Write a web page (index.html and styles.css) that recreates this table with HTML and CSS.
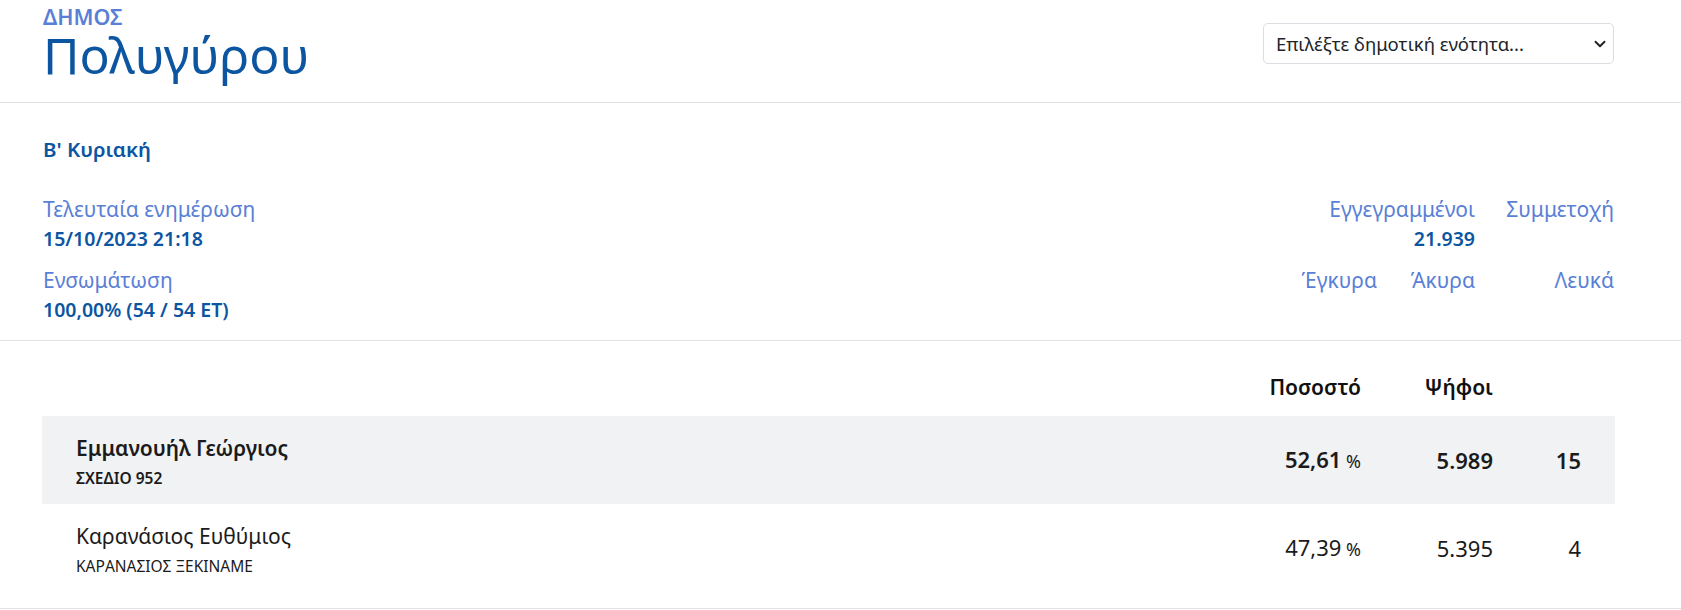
FILE: index.html
```html
<!DOCTYPE html>
<html lang="el">
<head>
<meta charset="utf-8">
<title>Δήμος Πολυγύρου</title>
<link rel="stylesheet" href="styles.css">
</head>
<body>
<header class="header">
  <div class="title-block">
    <div class="kicker">Δημος</div>
    <h1 class="name">Πολυγύρου</h1>
  </div>
  <div class="select">
    <span class="select-text">Επιλέξτε δημοτική ενότητα...</span>
    <svg class="chevron" viewBox="0 0 16 16" width="12" height="12"><path d="M2 5l6 6 6-6" fill="none" stroke="#212529" stroke-width="2.6" stroke-linecap="round" stroke-linejoin="round"/></svg>
  </div>
</header>

<section class="summary">
  <div class="district">Β' Κυριακή</div>
  <div class="stats">
    <div class="stats-left">
      <div class="stat">
        <div class="label">Τελευταία ενημέρωση</div>
        <div class="value">15/10/2023 21:18</div>
      </div>
      <div class="stat">
        <div class="label">Ενσωμάτωση</div>
        <div class="value">100,00% (54 / 54 ΕΤ)</div>
      </div>
    </div>
    <div class="stats-right">
      <div class="stat stat-registered">
        <div class="label">Εγγεγραμμένοι</div>
        <div class="value">21.939</div>
      </div>
      <div class="stat stat-turnout">
        <div class="label">Συμμετοχή</div>
      </div>
      <div class="stat stat-valid">
        <div class="label">Έγκυρα</div>
      </div>
      <div class="stat stat-invalid">
        <div class="label">Άκυρα</div>
      </div>
      <div class="stat stat-blank">
        <div class="label">Λευκά</div>
      </div>
    </div>
  </div>
</section>

<section class="results">
  <div class="row head">
    <div class="c-name"></div>
    <div class="c-pct">Ποσοστό</div>
    <div class="c-votes">Ψήφοι</div>
    <div class="c-seats"></div>
  </div>
  <div class="row cand winner">
    <div class="c-name">
      <div class="cand-name">Εμμανουήλ Γεώργιος</div>
      <div class="party">ΣΧΕΔΙΟ 952</div>
    </div>
    <div class="c-pct">52,61<span class="pct"> %</span></div>
    <div class="c-votes">5.989</div>
    <div class="c-seats">15</div>
  </div>
  <div class="row cand">
    <div class="c-name">
      <div class="cand-name">Καρανάσιος Ευθύμιος</div>
      <div class="party">ΚΑΡΑΝΑΣΙΟΣ ΞΕΚΙΝΑΜΕ</div>
    </div>
    <div class="c-pct">47,39<span class="pct"> %</span></div>
    <div class="c-votes">5.395</div>
    <div class="c-seats">4</div>
  </div>
</section>
</body>
</html>
```
FILE: styles.css
```css
* { box-sizing: border-box; }
html, body { margin: 0; padding: 0; background: #fff; }
body {
  font-family: "Noto Sans", "Open Sans", sans-serif;
  color: #1b1b1b;
}
.header {
  display: flex;
  justify-content: space-between;
  align-items: flex-start;
  padding: 0 67px 0 43px;
  height: 103px;
  border-bottom: 1px solid #dfe3e8;
}
.kicker {
  font-size: 21.5px;
  line-height: 26px;
  font-weight: 600;
  text-transform: uppercase;
  color: #5a7fd6;
  margin-top: 4px;
}
.name {
  margin: 0;
  font-size: 50px;
  line-height: 51px;
  font-weight: 400;
  color: #0c55a1;
}
.select {
  margin-top: 23px;
  width: 351px;
  height: 41px;
  border: 1px solid #dadee3;
  border-radius: 5px;
  display: flex;
  align-items: center;
  justify-content: space-between;
  padding: 0 7px 0 12px;
}
.select-text {
  font-size: 18.5px;
  color: #212529;
}
.chevron { width: 12px; height: 12px; }

.summary {
  padding: 32px 67px 0 43px;
  height: 238px;
  border-bottom: 1px solid #dfe3e8;
}
.district {
  font-size: 20.5px;
  line-height: 28px;
  font-weight: 600;
  color: #0c55a1;
}
.stats {
  display: flex;
  justify-content: space-between;
  align-items: flex-start;
  margin-top: 31px;
}
.stat { margin-bottom: 11px; }
.label {
  font-size: 21px;
  line-height: 30px;
  color: #5a7fd6;
}
.value {
  font-size: 19.5px;
  line-height: 30px;
  font-weight: 600;
  color: #0c55a1;
}
.stats-right {
  display: grid;
  grid-template-columns: 98px 98px 139px;
  align-content: start;
  justify-items: end;
  text-align: right;
}
.stat-registered { grid-column: 1 / 3; grid-row: 1; }
.stat-turnout { grid-column: 3; grid-row: 1; }
.stat-valid { grid-column: 1; grid-row: 2; }
.stat-invalid { grid-column: 2; grid-row: 2; }
.stat-blank { grid-column: 3; grid-row: 2; }

.results {
  padding: 32px 66px 16px 42px;
  border-bottom: 1px solid #dfe3e8;
}
.row {
  display: grid;
  grid-template-columns: 1fr 140px 132px 88px 34px;
  align-items: center;
}
.row > .c-name { padding-left: 34px; }
.c-pct, .c-votes, .c-seats { text-align: right; }
.head {
  height: 43px;
  align-items: start;
  font-size: 21px;
  line-height: 28px;
  font-weight: 600;
  color: #111;
}
.cand {
  height: 88px;
  font-size: 22px;
  line-height: 30px;
}
.cand > .c-name { align-self: start; padding-top: 18px; }
.winner { background: #f1f2f4; font-weight: 600; }
.cand-name {
  font-size: 21px;
  line-height: 28px;
}
.party {
  font-size: 15.5px;
  line-height: 22px;
  margin-top: 5px;
}
.pct { font-weight: 400; font-size: 18px; }
```
